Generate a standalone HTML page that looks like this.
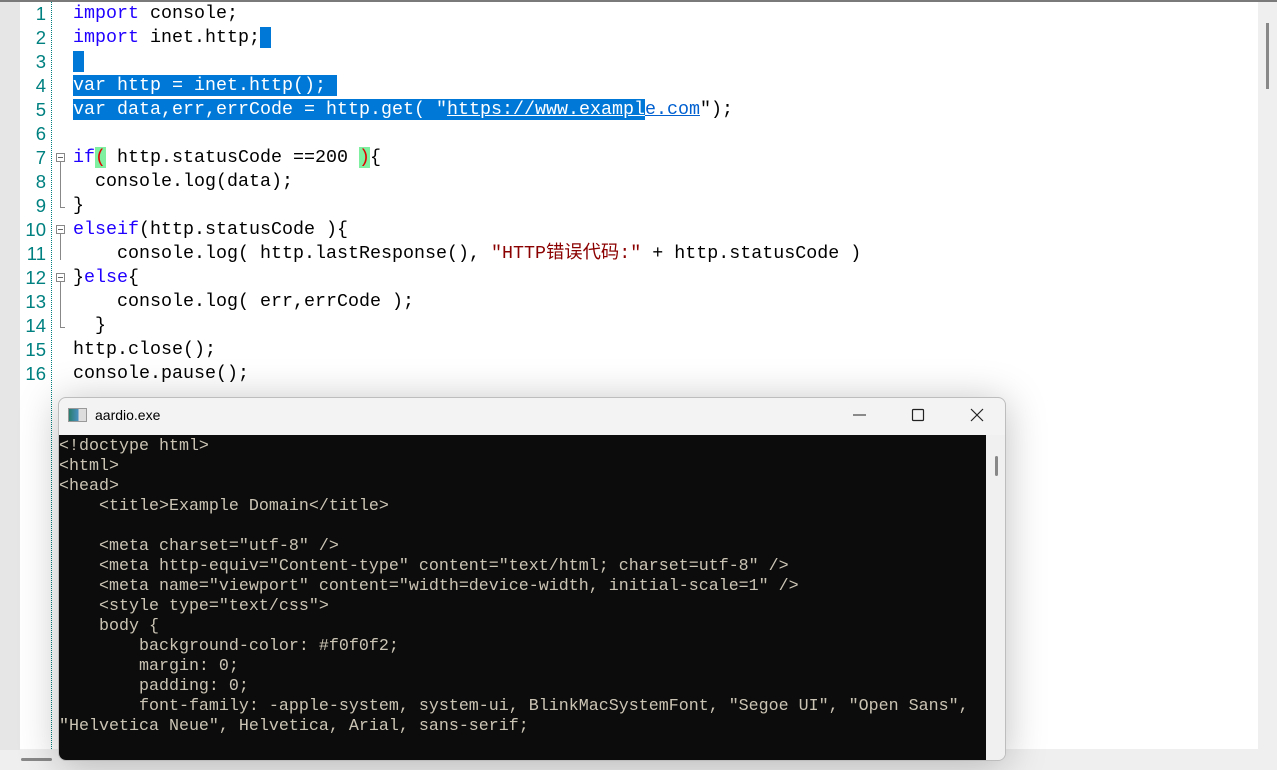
<!DOCTYPE html>
<html><head><meta charset="utf-8"><style>
*{margin:0;padding:0;box-sizing:border-box}
body{width:1277px;height:770px;overflow:hidden;background:#efefef;position:relative;font-family:"Liberation Mono","Noto Sans CJK SC",monospace}
#top{position:absolute;left:0;top:0;width:1277px;height:2px;background:#7a7a7a}
#gut{position:absolute;left:0;top:2px;width:20px;height:748px;background:#e6e6e6}
#ed{position:absolute;left:20px;top:2px;width:1238px;height:747px;background:#fff}
#vs{position:absolute;left:1258px;top:2px;width:19px;height:748px;background:#efefef}
#vthumb{position:absolute;left:1266px;top:23px;width:3px;height:66px;background:#888}
#hthumb{position:absolute;left:21px;top:758px;width:31px;height:3px;background:#888;border-radius:2px}
#dots{position:absolute;left:51px;top:2px;height:747px;border-left:1px dotted #008080}
.ln{position:absolute;left:20px;width:26px;text-align:right;font-family:"Liberation Sans",sans-serif;font-size:18.5px;color:#008080;line-height:24px;height:24px}
.cl{position:absolute;left:73px;font-size:18.33px;line-height:24px;height:24px;white-space:pre;color:#000}
.k{color:#2000ff}
.s{color:#8b0000}
.sel{background:#0078d7;color:#fff}
.u{color:#0060d0;text-decoration:underline}
.g{background:#7ef0a0}
.r{color:#e00000}
.fold{position:absolute;left:56px;width:9px;height:9px;border:1px solid #888;background:#fff}
.fold:after{content:"";position:absolute;left:1px;top:3px;width:5px;height:1px;background:#666}
.vl{position:absolute;left:60px;width:1px;background:#888}
.hl{position:absolute;left:60px;height:1px;width:5px;background:#888}
#win{position:absolute;left:58px;top:397px;width:948px;height:364px;background:#f3f3f3;border:1px solid #bdbdbd;border-radius:8px;overflow:hidden;box-shadow:0 4px 40px rgba(0,0,0,.25)}
#title{position:absolute;left:36px;top:9px;font-family:"Liberation Sans",sans-serif;font-size:14px;color:#000}
#ico{position:absolute;left:9px;top:10px;width:19px;height:14px;border:1px solid #999;background:linear-gradient(90deg,#2a7d6e 0,#4a90c0 55%,#ddd 56%)}
#con{position:absolute;left:0;top:37px;width:927px;height:327px;background:#0c0c0c}
#csb{position:absolute;left:927px;top:37px;width:21px;height:327px;background:#f0f0f0}
#cth{position:absolute;left:936px;top:58px;width:3px;height:20px;background:#888;border-radius:2px}
.ct{position:absolute;left:0;font-size:16.67px;line-height:20px;white-space:pre;color:#cbc4b4}
</style></head><body>
<div id="top"></div><div id="gut"></div><div id="ed"></div><div id="vs"></div><div id="vthumb"></div><div id="hthumb"></div>
<div id="dots"></div>

<div class="ln" style="top:2px">1</div>
<div class="ln" style="top:26px">2</div>
<div class="ln" style="top:50px">3</div>
<div class="ln" style="top:74px">4</div>
<div class="ln" style="top:98px">5</div>
<div class="ln" style="top:122px">6</div>
<div class="ln" style="top:146px">7</div>
<div class="ln" style="top:170px">8</div>
<div class="ln" style="top:194px">9</div>
<div class="ln" style="top:218px">10</div>
<div class="ln" style="top:242px">11</div>
<div class="ln" style="top:266px">12</div>
<div class="ln" style="top:290px">13</div>
<div class="ln" style="top:314px">14</div>
<div class="ln" style="top:338px">15</div>
<div class="ln" style="top:362px">16</div>

<div class="vl" style="top:162px;height:45px"></div><div class="hl" style="top:207px"></div>
<div class="vl" style="top:234px;height:26px"></div>
<div class="vl" style="top:282px;height:45px"></div><div class="hl" style="top:327px"></div>
<div class="fold" style="top:153px"></div>
<div class="fold" style="top:225px"></div>
<div class="fold" style="top:273px"></div>

<div class="cl" style="top:2px"><span class="k">import</span> console;</div>
<div class="cl" style="top:26px"><span class="k">import</span> inet.http;<span class="sel"> </span></div>
<div class="cl" style="top:50px"><span class="sel"> </span></div>
<div class="cl" style="top:74px"><span class="sel">var http = inet.http(); </span></div>
<div class="cl" style="top:98px"><span class="sel">var data,err,errCode = http.get( "<u>https://www.exampl</u></span><span class="u">e.com</span>");</div>
<div class="cl" style="top:146px"><span class="k">if</span><span class="g r">(</span> http.statusCode ==200 <span class="g r">)</span>{</div>
<div class="cl" style="top:170px">  console.log(data);</div>
<div class="cl" style="top:194px">}</div>
<div class="cl" style="top:218px"><span class="k">elseif</span>(http.statusCode ){</div>
<div class="cl" style="top:242px">    console.log( http.lastResponse(), <span class="s">"HTTP错误代码:"</span> + http.statusCode )</div>
<div class="cl" style="top:266px">}<span class="k">else</span>{</div>
<div class="cl" style="top:290px">    console.log( err,errCode );</div>
<div class="cl" style="top:314px">  }</div>
<div class="cl" style="top:338px">http.close();</div>
<div class="cl" style="top:362px">console.pause();</div>

<div id="win">
<div id="ico"></div><div id="title">aardio.exe</div>
<svg style="position:absolute;left:780px;top:6px" width="160" height="24">
<line x1="14" y1="11" x2="27" y2="11" stroke="#222" stroke-width="1"/>
<rect x="73.5" y="5.5" width="11" height="11" rx="1" fill="none" stroke="#222" stroke-width="1.2"/>
<path d="M132 5 L144 17 M144 5 L132 17" stroke="#222" stroke-width="1.2"/>
</svg>
<div id="con">
<div class="ct" style="top:2px">&lt;!doctype html&gt;
&lt;html&gt;
&lt;head&gt;
    &lt;title&gt;Example Domain&lt;/title&gt;

    &lt;meta charset=″utf-8″ /&gt;
    &lt;meta http-equiv=″Content-type″ content=″text/html; charset=utf-8″ /&gt;
    &lt;meta name=″viewport″ content=″width=device-width, initial-scale=1″ /&gt;
    &lt;style type=″text/css″&gt;
    body {
        background-color: #f0f0f2;
        margin: 0;
        padding: 0;
        font-family: -apple-system, system-ui, BlinkMacSystemFont, ″Segoe UI″, ″Open Sans″,
″Helvetica Neue″, Helvetica, Arial, sans-serif;</div>
</div>
<div id="csb"></div><div id="cth"></div>
</div>
</body></html>
